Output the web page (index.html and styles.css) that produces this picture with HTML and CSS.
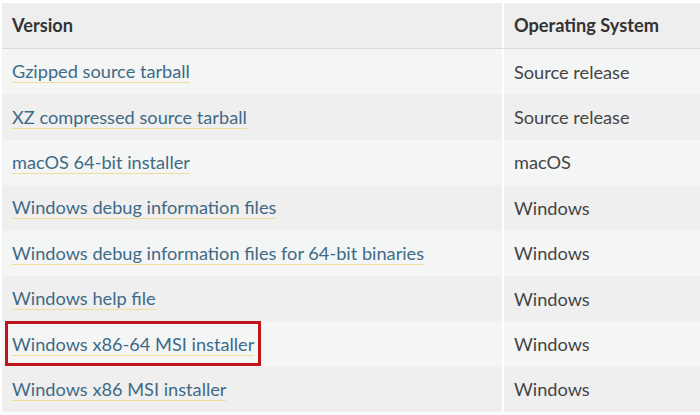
FILE: index.html
```html
<!DOCTYPE html>
<html>
<head>
<meta charset="utf-8">
<link rel="stylesheet" href="styles.css">
</head>
<body>
<div class="table">
  <div class="row head">
    <div class="cell">Version</div>
    <div class="cell">Operating System</div>
  </div>
  <div class="row light">
    <div class="cell"><a href="#">Gzipped source tarball</a></div>
    <div class="cell">Source release</div>
  </div>
  <div class="row gray">
    <div class="cell"><a href="#">XZ compressed source tarball</a></div>
    <div class="cell">Source release</div>
  </div>
  <div class="row light">
    <div class="cell"><a href="#">macOS 64-bit installer</a></div>
    <div class="cell">macOS</div>
  </div>
  <div class="row gray">
    <div class="cell"><a href="#">Windows debug information files</a></div>
    <div class="cell">Windows</div>
  </div>
  <div class="row light">
    <div class="cell"><a href="#">Windows debug information files for 64-bit binaries</a></div>
    <div class="cell">Windows</div>
  </div>
  <div class="row gray">
    <div class="cell"><a href="#">Windows help file</a></div>
    <div class="cell">Windows</div>
  </div>
  <div class="row light">
    <div class="cell"><span class="highlight"><a href="#">Windows x86-64 MSI installer</a></span></div>
    <div class="cell">Windows</div>
  </div>
  <div class="row gray">
    <div class="cell"><a href="#">Windows x86 MSI installer</a></div>
    <div class="cell">Windows</div>
  </div>
</div>
</body>
</html>
```
FILE: styles.css
```css
html, body {
  margin: 0;
  padding: 0;
  background: #ffffff;
}
body {
  font-family: Lato, "Open Sans", sans-serif;
  font-size: 18.2px;
  color: #444444;
}
.table {
  display: flex;
  flex-direction: column;
  padding: 3px 0 0 2px;
}
.row {
  display: grid;
  grid-template-columns: 500px 1fr;
  column-gap: 2px;
  height: 45.4px;
}
.row.head {
  height: 45px;
  border-bottom: 1px solid #dadada;
}
.cell {
  display: flex;
  align-items: center;
  padding-left: 10px;
}
.head .cell {
  background: #eeeeee;
  color: #333333;
  font-weight: 700;
  padding-bottom: 2px;
}
.light .cell {
  background: #f4f6f6;
}
.gray .cell {
  background: #efefef;
}
a {
  color: #3f6a86;
  text-decoration: none;
  border-bottom: 1px solid #f1dc9a;
  line-height: 22px;
}
.highlight {
  position: relative;
}
.highlight::after {
  content: "";
  position: absolute;
  left: -7px;
  right: -7px;
  top: -12px;
  bottom: -11px;
  border: 3px solid #c3141c;
}
```
